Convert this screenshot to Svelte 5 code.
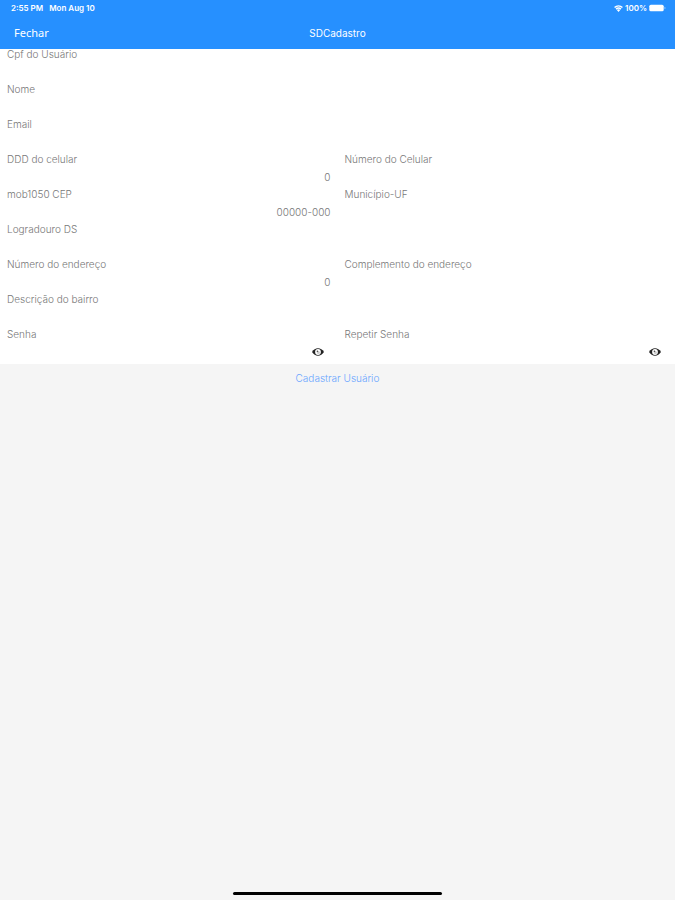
<script lang="ts">
  type Field = {
    id: string;
    label: string;
    type?: string;
    placeholder?: string;
    numeric?: boolean;
    wide?: boolean;
  };

  const fields: Field[] = [
    { id: "cpf", label: "Cpf do Usuário", wide: true },
    { id: "nome", label: "Nome", wide: true },
    { id: "email", label: "Email", type: "email", wide: true },
    { id: "ddd", label: "DDD do celular", placeholder: "0", numeric: true },
    { id: "celular", label: "Número do Celular", type: "tel" },
    { id: "cep", label: "mob1050 CEP", placeholder: "00000-000", numeric: true },
    { id: "municipio", label: "Município-UF" },
    { id: "logradouro", label: "Logradouro DS", wide: true },
    { id: "numero", label: "Número do endereço", placeholder: "0", numeric: true },
    { id: "complemento", label: "Complemento do endereço" },
    { id: "bairro", label: "Descrição do bairro", wide: true },
    { id: "senha", label: "Senha", type: "password" },
    { id: "repetir", label: "Repetir Senha", type: "password" },
  ];

  let values: Record<string, string> = $state({});
  let visible: Record<string, boolean> = $state({});

  function toggle(id: string) {
    visible[id] = !visible[id];
  }
</script>

<div class="page">
  <header>
    <div class="status">
      <span>2:55 PM</span>
      <span>Mon Aug 10</span>
      <div class="indicators">
        <svg class="wifi" viewBox="0 0 16 12" aria-hidden="true">
          <path
            d="M1 4.2a10.4 10.4 0 0 1 14 0M3.7 7a6.4 6.4 0 0 1 8.6 0"
            fill="none"
            stroke="currentColor"
            stroke-width="2.8"
          />
          <path d="M8 12 5 8.8a4.4 4.4 0 0 1 6 0z" fill="currentColor" />
        </svg>
        <span>100%</span>
        <svg class="battery" viewBox="0 0 17 8" aria-hidden="true">
          <rect x="0.3" y="0.7" width="14.4" height="6.6" rx="1.6" fill="currentColor" />
          <path d="M15.5 2.8v2.4q1-.3 1-1.2t-1-1.2z" fill="currentColor" opacity="0.6" />
        </svg>
      </div>
    </div>
    <nav>
      <button type="button" class="close">Fechar</button>
      <h1>SDCadastro</h1>
    </nav>
  </header>

  <form id="cadastro" onsubmit={(e) => e.preventDefault()}>
    {#each fields as field (field.id)}
      <div class="field" class:wide={field.wide}>
        <label for={field.id}>{field.label}</label>
        <div class="control">
          <input
            id={field.id}
            type={visible[field.id] ? "text" : (field.type ?? "text")}
            placeholder={field.placeholder}
            class:numeric={field.numeric}
            bind:value={values[field.id]}
          />
          {#if field.type === "password"}
            <button
              type="button"
              class="eye"
              aria-label="Mostrar senha"
              onclick={() => toggle(field.id)}
            >
              <svg viewBox="0 0 12 8" aria-hidden="true">
                <path d="M0 4Q2.4.3 6 .3T12 4Q9.6 7.7 6 7.7T0 4z" fill="#222" />
                <circle cx="6" cy="4" r="2.9" fill="#fff" />
                <circle cx="6.4" cy="4.4" r="1.5" fill="#ccc" />
                <circle cx="5.4" cy="3.2" r="0.8" fill="#444" />
              </svg>
            </button>
          {/if}
        </div>
      </div>
    {/each}
  </form>

  <button type="submit" form="cadastro" class="submit">Cadastrar Usuário</button>

  <div class="home"></div>
</div>

<style>
  :global(body) {
    margin: 0;
    background: #f5f5f5;
  }

  .page {
    display: flex;
    flex-direction: column;
    min-height: 100vh;
    font-family: Inter, "Liberation Sans", sans-serif;
    font-size: 10px;
    color: #777;
  }

  button {
    border: 0;
    padding: 0;
    background: none;
    font: inherit;
    cursor: pointer;
  }

  header {
    background: #2690ff;
    color: #fff;
  }

  .status {
    display: flex;
    align-items: center;
    gap: 6px;
    height: 16px;
    padding: 0 9px 0 11px;
    font-size: 8px;
    font-weight: 600;
  }

  .indicators {
    display: flex;
    align-items: center;
    gap: 2px;
    margin-left: auto;
  }

  .wifi {
    width: 9px;
    height: 7px;
  }

  .battery {
    width: 17px;
    height: 8px;
  }

  nav {
    display: grid;
    grid-template-columns: 1fr auto 1fr;
    align-items: center;
    height: 33px;
    padding: 0 14px;
  }

  .close {
    justify-self: start;
    color: #fff;
    font-family: "Noto Sans", sans-serif;
    font-size: 11px;
    line-height: 16px;
  }

  h1 {
    margin: 0;
    font-size: 10px;
    font-weight: 400;
  }

  form {
    display: grid;
    grid-template-columns: 1fr 1fr;
    background: #fff;
  }

  .field {
    display: flex;
    flex-direction: column;
    height: 35px;
    padding: 0 7px;
    min-width: 0;
  }

  .wide {
    grid-column: 1 / -1;
  }

  label {
    line-height: 10px;
    font-weight: 300;
  }

  .control {
    display: flex;
    align-items: center;
    flex: 1;
  }

  input {
    flex: 1;
    min-width: 0;
    height: 20px;
    border: 0;
    padding: 0;
    outline: none;
    background: transparent;
    font: inherit;
    font-weight: 300;
    color: #555;
  }

  input::placeholder {
    color: #777;
    opacity: 1;
  }

  .numeric {
    text-align: right;
  }

  .eye {
    display: flex;
    align-items: center;
    justify-content: center;
    width: 26px;
    height: 20px;
  }

  .eye svg {
    width: 12px;
    height: 8px;
  }

  .submit {
    align-self: center;
    height: 28px;
    color: #6aa5ff;
    font-weight: 300;
  }

  .home {
    width: 31%;
    height: 3px;
    margin: auto auto 5px;
    border-radius: 2px;
    background: #000;
  }
</style>
